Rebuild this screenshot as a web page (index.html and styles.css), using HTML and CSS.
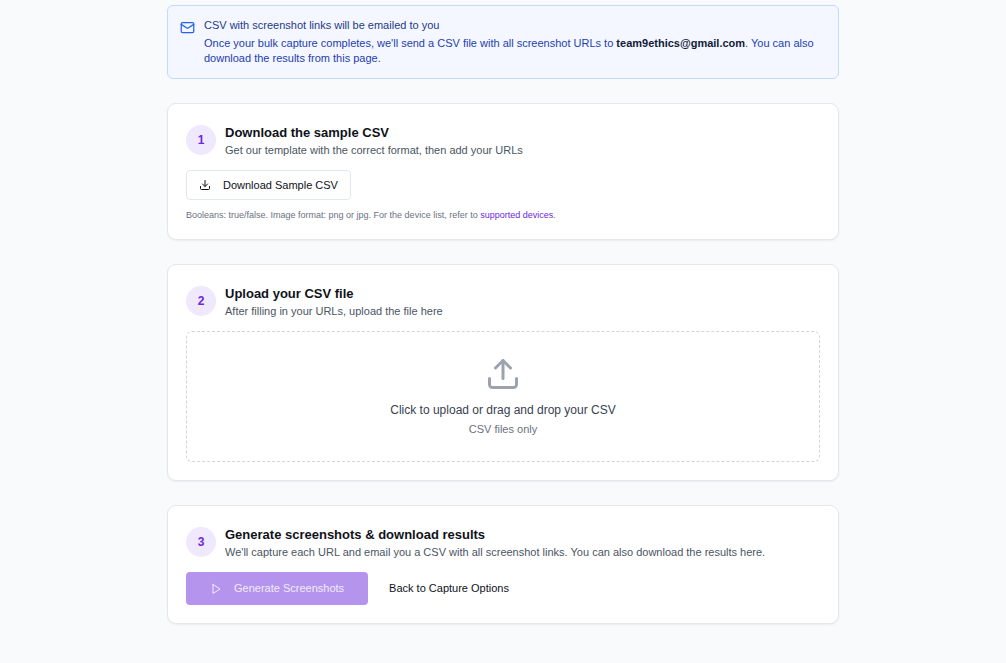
FILE: index.html
```html
<!DOCTYPE html>
<html lang="en">
<head>
    <meta charset="UTF-8">
    <meta name="viewport" content="width=device-width, initial-scale=1.0">
    <title>Bulk Capture</title>
    <link rel="stylesheet" href="styles.css">
</head>
<body>
    <main class="container">
        <div class="notice">
            <svg class="notice-icon" viewBox="0 0 24 24" aria-hidden="true">
                <rect x="2" y="4" width="20" height="16" rx="2"/>
                <path d="m22 7-8.97 5.7a1.94 1.94 0 0 1-2.06 0L2 7"/>
            </svg>
            <div>
                <p class="notice-title">CSV with screenshot links will be emailed to you</p>
                <p class="notice-text">Once your bulk capture completes, we'll send a CSV file with all screenshot URLs to <strong>team9ethics@gmail.com</strong>. You can also download the results from this page.</p>
            </div>
        </div>

        <section class="card">
            <div class="card-header">
                <span class="step">1</span>
                <div>
                    <h2>Download the sample CSV</h2>
                    <p class="subtitle">Get our template with the correct format, then add your URLs</p>
                </div>
            </div>
            <button type="button" class="btn btn-outline">
                <svg class="btn-icon" viewBox="0 0 24 24" aria-hidden="true">
                    <path d="M21 15v4a2 2 0 0 1-2 2H5a2 2 0 0 1-2-2v-4"/>
                    <path d="m7 10 5 5 5-5"/>
                    <path d="M12 15V3"/>
                </svg>
                Download Sample CSV
            </button>
            <p class="note">Booleans: true/false. Image format: png or jpg. For the device list, refer to <a href="#">supported devices</a>.</p>
        </section>

        <section class="card">
            <div class="card-header">
                <span class="step">2</span>
                <div>
                    <h2>Upload your CSV file</h2>
                    <p class="subtitle">After filling in your URLs, upload the file here</p>
                </div>
            </div>
            <label class="dropzone" for="csvFile">
                <svg class="dropzone-icon" viewBox="0 0 24 24" aria-hidden="true">
                    <path d="M21 15v4a2 2 0 0 1-2 2H5a2 2 0 0 1-2-2v-4"/>
                    <path d="m17 8-5-5-5 5"/>
                    <path d="M12 3v12"/>
                </svg>
                <span class="dropzone-title">Click to upload or drag and drop your CSV</span>
                <span class="dropzone-hint">CSV files only</span>
                <input class="file-input" id="csvFile" type="file" accept=".csv">
            </label>
        </section>

        <section class="card">
            <div class="card-header">
                <span class="step">3</span>
                <div>
                    <h2>Generate screenshots &amp; download results</h2>
                    <p class="subtitle">We'll capture each URL and email you a CSV with all screenshot links. You can also download the results here.</p>
                </div>
            </div>
            <div class="actions">
                <button type="button" class="btn btn-primary" disabled>
                    <svg class="btn-icon" viewBox="0 0 24 24" aria-hidden="true">
                        <path d="m6 3 14 9-14 9V3z"/>
                    </svg>
                    Generate Screenshots
                </button>
                <button type="button" class="btn btn-ghost">Back to Capture Options</button>
            </div>
        </section>
    </main>
</body>
</html>
```

FILE: styles.css
```css
* {
    box-sizing: border-box;
}
body {
    margin: 0;
    padding: 5px 18px 24px;
    background: #f9fafc;
    color: #0f1219;
    font-family: "Liberation Sans", Arial, sans-serif;
    font-size: 11px;
    line-height: 15px;
}
h2, p {
    margin: 0;
}
svg {
    flex-shrink: 0;
    fill: none;
    stroke: currentColor;
    stroke-width: 2;
    stroke-linecap: round;
    stroke-linejoin: round;
}
.container {
    display: flex;
    flex-direction: column;
    gap: 24px;
    max-width: 672px;
    margin: 0 auto;
}
.notice {
    display: flex;
    gap: 9px;
    padding: 12px;
    background: #f4f7ff;
    border: 1px solid #bfdbfe;
    border-radius: 6px;
}
.notice-icon {
    width: 15px;
    height: 15px;
    margin-top: 2px;
    color: #2563eb;
}
.notice-title {
    color: #1e3a8a;
}
.notice-text {
    margin-top: 3px;
    color: #1e40af;
}
.notice-text strong {
    color: #111a3a;
}
.card {
    padding: 18px;
    background: #fff;
    border: 1px solid #e5e7eb;
    border-radius: 9px;
    box-shadow: 0 1px 2px rgba(0, 0, 0, 0.06);
}
.card-header {
    display: flex;
    align-items: center;
    gap: 9px;
    margin-bottom: 12px;
}
.step {
    display: flex;
    flex-shrink: 0;
    align-items: center;
    justify-content: center;
    width: 30px;
    height: 30px;
    border-radius: 50%;
    background: #f0e8fc;
    color: #6d28d9;
    font-size: 12px;
    font-weight: bold;
}
h2 {
    font-size: 13px;
    line-height: 21px;
}
.subtitle {
    color: #4b5563;
}
.btn {
    display: inline-flex;
    align-items: center;
    justify-content: center;
    gap: 12px;
    border: 1px solid transparent;
    border-radius: 4px;
    background: transparent;
    color: inherit;
    font: inherit;
    cursor: pointer;
}
.btn-icon {
    width: 12px;
    height: 12px;
}
.btn-outline {
    min-height: 30px;
    padding: 6px 12px;
    border-color: #e2e8f0;
    background: #fff;
}
.btn-primary {
    padding: 8px 23px;
    background: #b594ee;
    color: #f2ebfc;
    cursor: default;
}
.btn-ghost {
    padding: 8px 11px;
}
.note {
    margin-top: 9px;
    color: #6b7280;
    font-size: 9px;
    line-height: 12px;
}
.note a {
    color: #6d28d9;
    text-decoration: none;
}
.dropzone {
    display: flex;
    flex-direction: column;
    align-items: center;
    position: relative;
    padding: 24px;
    border: 1px dashed #d1d5db;
    border-radius: 6px;
    cursor: pointer;
}
.dropzone-icon {
    width: 36px;
    height: 36px;
    margin-bottom: 9px;
    color: #9ca3af;
}
.dropzone-title {
    color: #374151;
    font-size: 12px;
    line-height: 18px;
}
.dropzone-hint {
    margin-top: 3px;
    color: #6b7280;
}
/* The label is the visible control, the input lies over it */
.file-input {
    position: absolute;
    inset: 0;
    width: 100%;
    height: 100%;
    opacity: 0;
    cursor: pointer;
}
.actions {
    display: flex;
    flex-wrap: wrap;
    gap: 9px;
}
```
